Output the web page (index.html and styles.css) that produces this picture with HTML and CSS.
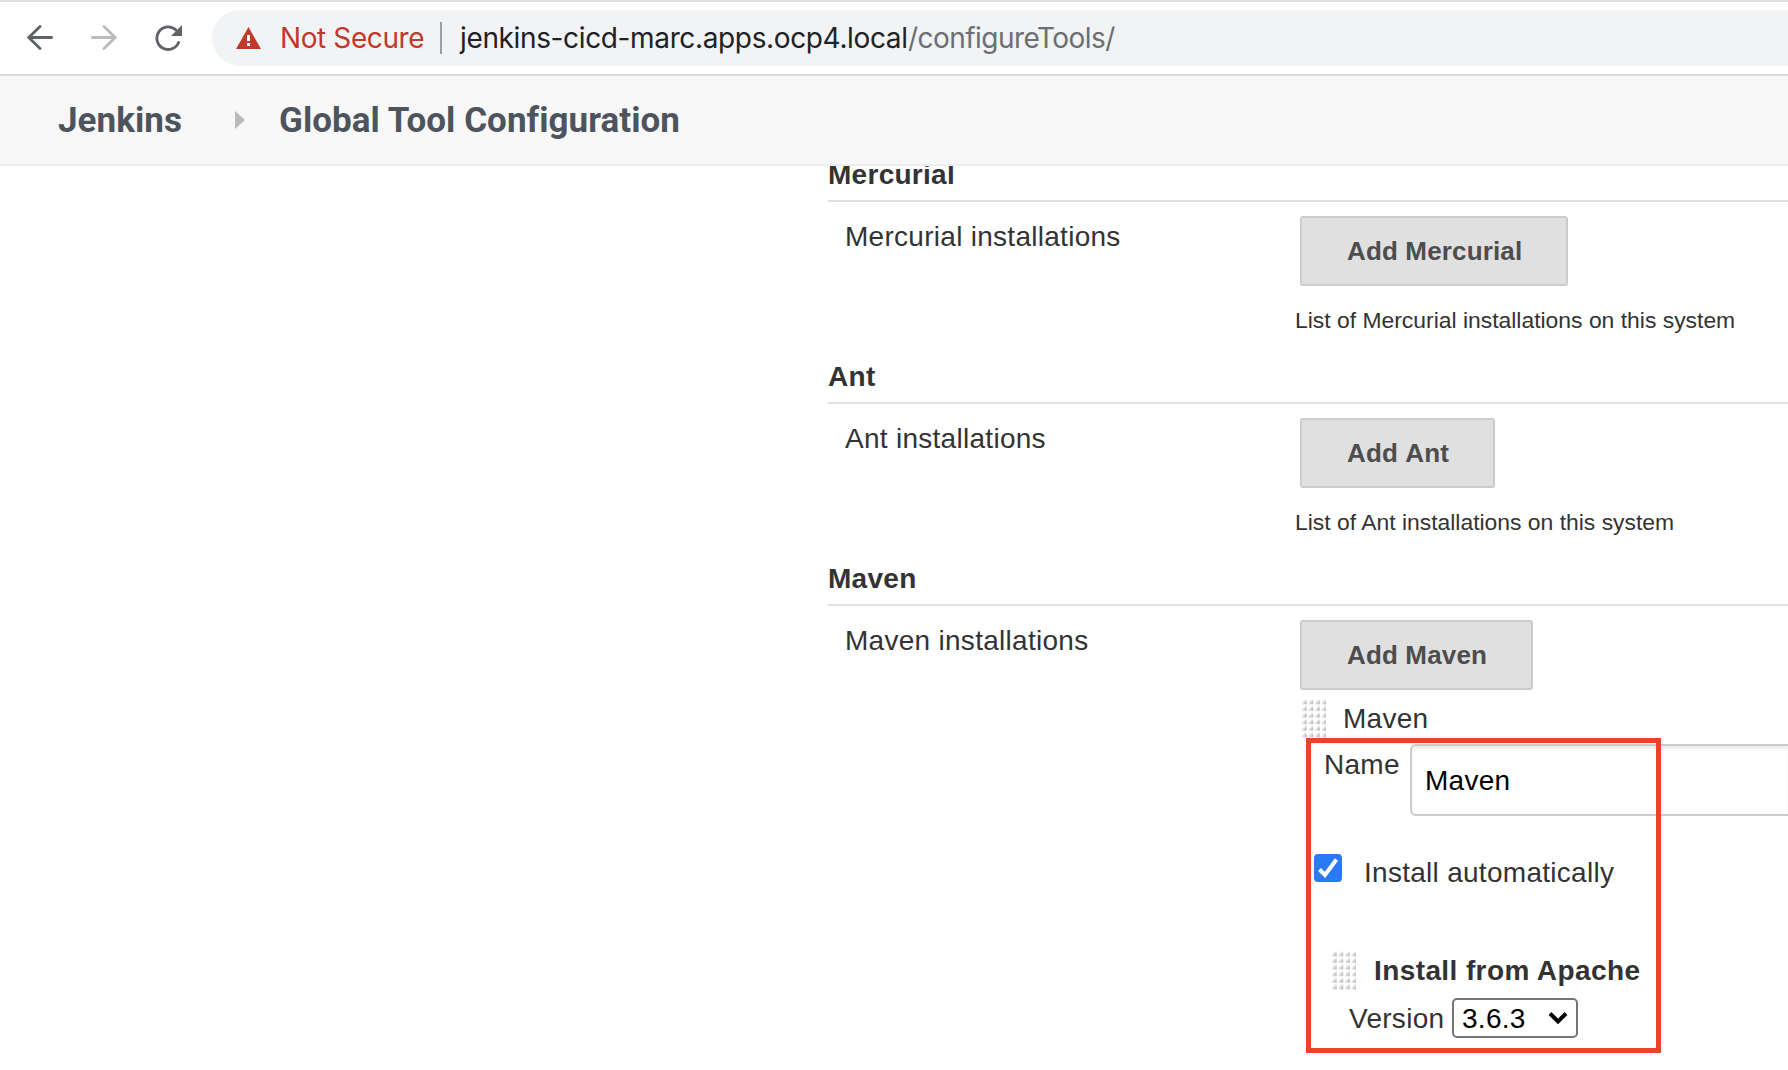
FILE: index.html
```html
<!DOCTYPE html>
<html lang="en">
<head>
<meta charset="utf-8">
<title>Global Tool Configuration</title>
<link rel="stylesheet" href="styles.css">
</head>
<body>
<svg width="0" height="0" class="defs" aria-hidden="true">
  <defs>
    <linearGradient id="dot" x1="0" y1="0" x2="1" y2="1">
      <stop offset="0.25" stop-color="#fff"/>
      <stop offset="1" stop-color="#a09f9d"/>
    </linearGradient>
    <pattern id="grip" width="6.55" height="6.6" patternUnits="userSpaceOnUse">
      <rect x="0" y="1.4" width="4.7" height="4.8" rx="0.6" fill="url(#dot)"/>
    </pattern>
  </defs>
</svg>
<div class="toolbar">
  <div class="nav">
    <svg width="26" height="26" viewBox="0 0 26 26" fill="none" stroke="#5f6368" stroke-width="2.8" stroke-linecap="round"><path d="M24.6 12.5H2M13 1.5L1.8 12.5L13 23.5"/></svg>
    <svg width="26" height="26" viewBox="0 0 26 26" fill="none" stroke="#babcbe" stroke-width="2.8" stroke-linecap="round"><path d="M1.4 12.5H24M13 1.5L24.2 12.5L13 23.5"/></svg>
    <svg width="27" height="26" viewBox="0 0 27 26"><path d="M23.6 17.5A11.3 11.3 0 1 1 21 5" fill="none" stroke="#5f6368" stroke-width="2.9" stroke-linecap="round"/><path d="M27 0V11H16Z" fill="#5f6368"/></svg>
  </div>
  <div class="omnibox">
    <svg class="warn" width="25" height="22" viewBox="0 0 25 22"><path d="M12.5 0L25 22H0Z" fill="#c0392b"/><path d="M11 8h3v6h-3zM11 16h3v3h-3z" fill="#fff"/></svg>
    <span class="insecure">Not Secure</span>
    <span class="sep"></span>
    <span class="url"><span class="host">jenkins-cicd-marc.apps.ocp4.local</span><span class="path">/configureTools/</span></span>
  </div>
</div>
<div class="crumbs">
  <span class="crumb-home">Jenkins</span>
  <svg width="10" height="18" viewBox="0 0 10 18"><path d="M0 0L10 9L0 18Z" fill="#bbb"/></svg>
  <span class="crumb-page">Global Tool Configuration</span>
</div>
<main class="form">
  <section class="section">
    <h2>Mercurial</h2>
    <div class="row">
      <div class="label">Mercurial installations</div>
      <div class="field"><button class="add">Add Mercurial</button><p class="desc">List of Mercurial installations on this system</p></div>
    </div>
  </section>
  <section class="section">
    <h2>Ant</h2>
    <div class="row">
      <div class="label">Ant installations</div>
      <div class="field"><button class="add">Add Ant</button><p class="desc">List of Ant installations on this system</p></div>
    </div>
  </section>
  <section class="section">
    <h2>Maven</h2>
    <div class="row">
      <div class="label">Maven installations</div>
      <div class="field">
        <button class="add">Add Maven</button>
        <div class="grip-row">
          <svg width="24" height="40" viewBox="0 0 24 40"><rect width="24" height="40" fill="url(#grip)"/></svg>
          <span>Maven</span>
        </div>
        <div class="name-row"><span>Name</span><div class="input">Maven</div></div>
        <div class="check-row">
          <svg width="28" height="28" viewBox="0 0 28 28"><rect width="28" height="28" rx="4" fill="#2a7af6"/><path d="M5.5 15.5L11 21L22.5 5.5" fill="none" stroke="#fff" stroke-width="4"/></svg>
          <span>Install automatically</span>
        </div>
        <div class="grip-row installer">
          <svg width="24" height="40" viewBox="0 0 24 40"><rect width="24" height="40" fill="url(#grip)"/></svg>
          <span>Install from Apache</span>
        </div>
        <div class="version-row"><span>Version</span>
          <div class="select"><span>3.6.3</span><svg width="20" height="14" viewBox="0 0 20 14"><path d="M2 2.5L10 10.5L18 2.5" fill="none" stroke="#000" stroke-width="4"/></svg></div>
        </div>
      </div>
    </div>
  </section>
</main>
<div class="highlight"></div>
</body>
</html>
```
FILE: styles.css
```css
* { box-sizing: border-box; }
body {
  margin: 0;
  width: 1788px;
  height: 1070px;
  overflow: hidden;
  background: #fff;
  color: #333;
  font: 28px/32px "Liberation Sans", Arial, sans-serif;
  letter-spacing: 0.28px;
}
.defs { position: absolute; }
span { white-space: nowrap; }
.toolbar {
  display: flex;
  height: 76px;
  padding-top: 8px;
  border-top: 2px solid #dfdfe4;
  border-bottom: 2px solid #d9d9de;
}
.nav {
  display: flex;
  gap: 38px;
  width: 212px;
  padding: 15px 0 0 27px;
}
.omnibox {
  display: flex;
  flex: 1;
  align-items: center;
  height: 56px;
  padding-left: 24px;
  border-radius: 28px 0 0 28px;
  background: #f1f3f4;
  font-family: Inter, sans-serif;
}
.omnibox span { flex: none; }
.insecure {
  width: 160px;
  margin-left: 19px;
  color: #c0392b;
  letter-spacing: -0.4px;
}
.sep { width: 2px; height: 32px; margin-right: 18px; background: #9aa0a6; }
.url { display: flex; }
.host { width: 448px; color: #202124; letter-spacing: -0.36px; }
.path { color: #6b6e72; letter-spacing: -0.55px; }
.crumbs {
  display: flex;
  align-items: center;
  height: 90px;
  padding-left: 58px;
  border-bottom: 2px solid #ebeef1;
  background: #f8f8f8;
  color: #4d545d;
  font: bold 35px/40px Roboto, sans-serif;
  letter-spacing: 0.05px;
}
.crumbs span { padding-top: 2px; }
.crumb-home { width: 177px; }
.crumb-page { margin-left: 34px; }
.form {
  height: 904px;
  padding-left: 828px;
  overflow: hidden;
}
.section { height: 202px; }
.section:first-child { margin-top: -8px; }
h2 {
  height: 44px;
  margin: 0;
  padding-top: 1px;
  border-bottom: 2px solid #dfdfdf;
  font-size: 28px;
  line-height: 32px;
}
.row {
  display: grid;
  grid-template-columns: 468px 1fr;
  padding-top: 14px;
}
.label { padding: 5px 0 0 17px; }
.add {
  display: block;
  height: 70px;
  margin: 0 0 0 4px;
  padding: 0 44px 0 45px;
  border: 2px solid #ccc;
  border-radius: 3px;
  background: #e0e0e0;
  color: #4d4d4d;
  font: bold 26px/30px "Liberation Sans", Arial, sans-serif;
  font-kerning: none;
  letter-spacing: 0.15px;
}
.desc {
  margin: 20px 0 0 -1px;
  font-size: 22.9px;
  line-height: 28px;
  letter-spacing: 0;
}
.grip-row {
  display: flex;
  gap: 17px;
  height: 54px;
  padding: 8px 0 0 6px;
}
.grip-row span { padding-top: 5px; }
.name-row {
  display: flex;
  height: 72px;
  padding-left: 28px;
}
.name-row span { width: 86px; padding-top: 5px; }
.input {
  flex: 1;
  padding: 19px 13px;
  border: 2px solid #ccc;
  border-right: 0;
  border-radius: 6px 0 0 6px;
  box-shadow: inset 0 3px 3px rgba(0, 0, 0, 0.075);
  color: #000;
}
.check-row {
  display: flex;
  gap: 22px;
  margin-top: 38px;
  height: 88px;
  padding-left: 18px;
}
.check-row span { padding-top: 3px; }
.installer {
  gap: 18px;
  height: 56px;
  padding-left: 36px;
  font-weight: bold;
  letter-spacing: 0.4px;
}
.installer span { padding-top: 5px; }
.version-row { display: flex; padding-left: 53px; }
.version-row > span { width: 103px; padding-top: 5px; }
.select {
  display: flex;
  justify-content: space-between;
  align-items: center;
  width: 126px;
  height: 40px;
  padding: 0 8px;
  border: 2px solid #767676;
  border-radius: 5px;
  color: #000;
}
.select span { padding-top: 2px; }
.highlight {
  position: absolute;
  left: 1306px;
  top: 737.5px;
  width: 355px;
  height: 315px;
  border: 5px solid #ec4328;
}
```
